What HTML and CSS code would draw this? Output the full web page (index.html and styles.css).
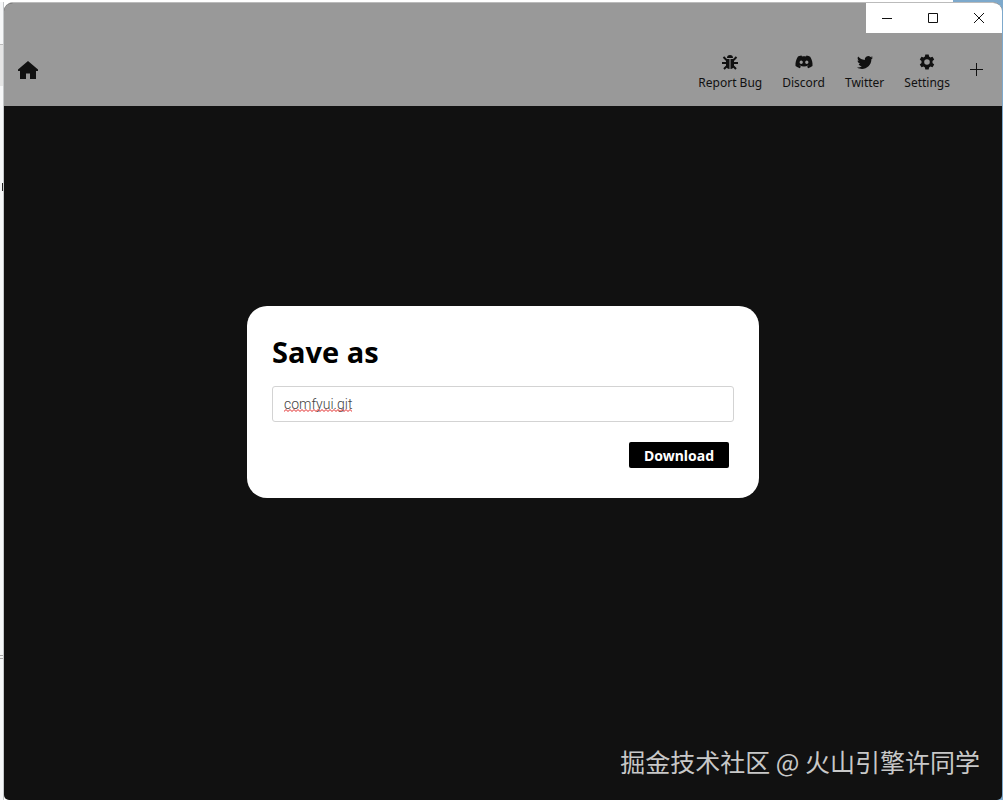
FILE: index.html
```
<!DOCTYPE html>
<html lang="en">
    <head>
        <meta charset="utf-8">
        <title>Save as</title>
        <link rel="stylesheet" href="styles.css">
    </head>
    <body>
        <!-- the edge of the window that sits behind this one -->
        <div class="behind">
            <div class="behind-tab"></div>
            <div class="behind-mark"></div>
            <div class="behind-rule"></div>
        </div>

        <div class="window">
            <header>
                <div class="controls">
                    <button type="button" aria-label="Minimize">
                        <svg width="12" height="12" viewBox="0 0 12 12"><path d="M1 6.5h10"/></svg>
                    </button>
                    <button type="button" aria-label="Maximize">
                        <svg width="12" height="12" viewBox="0 0 12 12"><path d="M1.5 1.5h9v9h-9z"/></svg>
                    </button>
                    <button type="button" aria-label="Close">
                        <svg width="12" height="12" viewBox="0 0 12 12"><path d="M1 1l10 10M11 1L1 11"/></svg>
                    </button>
                </div>
                <nav>
                    <a class="home" href="#" aria-label="Home">
                        <svg width="20" height="18" viewBox="0 0 20 18"><path d="M10 0L0 8.500v1.500h2v8h6v-5.500h4V18h6v-8h2V8.500z"/></svg>
                    </a>
                    <a class="item" href="#">
                        <svg width="16" height="16" viewBox="0 0 16 16">
                            <path d="M5 4a3 3 0 0 1 6 0zM4 5h3.500v10C5.500 15 4 13.500 4 11.500zM12 5H8.500v10c2 0 3.500-1.500 3.500-3.500z"/>
                            <path class="line" d="M1.500 3l3 3M14.500 3l-3 3M0 9h4.500M11.500 9H16M2 15l3-3M14 15l-3-3"/>
                        </svg>
                        Report Bug
                    </a>
                    <a class="item" href="#">
                        <svg width="18" height="16" viewBox="0 0 18 16"><path fill-rule="evenodd" d="M6.500 1.500C4.800 1.700 3.500 2.200 2.800 2.700 1 5.500.3 8.500.5 12c1.300 1.100 2.800 1.800 4.400 2.200l1-1.600-1.400-.8.4-.3c2.600 1.200 5.600 1.200 8.200 0l.4.300-1.400.8 1 1.600c1.600-.4 3.100-1.100 4.400-2.200.3-3.500-.5-6.500-2.300-9.300-.9-.5-2.200-1-3.700-1.200l-.5 1c-1.300-.2-2.700-.2-4 0zM6.200 6.500c.9 0 1.600.8 1.600 1.800s-.7 1.700-1.600 1.700-1.600-.8-1.600-1.700.7-1.800 1.600-1.800zM11.800 6.500c.9 0 1.600.8 1.600 1.800s-.7 1.700-1.600 1.700-1.600-.8-1.600-1.700.7-1.800 1.600-1.800z"/></svg>
                        Discord
                    </a>
                    <a class="item" href="#">
                        <svg width="16" height="16" viewBox="0 0 16 16"><path d="M16 3.500c-.6.300-1.200.4-1.900.5.700-.4 1.200-1 1.400-1.800-.6.400-1.300.6-2 .8a3.300 3.300 0 0 0-5.600 3C5.100 5.900 2.700 4.600 1.100 2.600c-.9 1.500-.4 3.400 1 4.400-.5 0-1-.2-1.500-.4 0 1.600 1.100 2.900 2.600 3.300-.5.100-1 .1-1.500 0 .4 1.300 1.600 2.200 3.100 2.300A6.600 6.600 0 0 1 0 13.500c6.300 3.800 14.500-.4 14.400-8.300.6-.5 1.200-1 1.600-1.700z"/></svg>
                        Twitter
                    </a>
                    <a class="item" href="#">
                        <svg width="16" height="16" viewBox="0 0 16 16"><path fill-rule="evenodd" d="M6.300.5h3.400l.4 2.100 1.300.8 2.100-.7 1.700 2.900-1.700 1.500v1.800l1.700 1.500-1.700 2.900-2.100-.7-1.300.8-.4 2.100H6.300l-.4-2.100-1.300-.8-2.100.7L.8 10.400l1.700-1.500V7.100L.8 5.600l1.700-2.900 2.100.7 1.300-.8zM8 5.200a2.800 2.800 0 1 0 0 5.600 2.800 2.800 0 0 0 0-5.600z"/></svg>
                        Settings
                    </a>
                    <button class="add" type="button" aria-label="New window">
                        <svg width="13" height="13" viewBox="0 0 13 13"><path d="M6.500 0v13M0 6.500h13"/></svg>
                    </button>
                </nav>
            </header>

            <main>
                <form class="dialog">
                    <h1><label for="filename">Save as</label></h1>
                    <div class="field">
                        <input id="filename" type="text" value="comfyui.git" spellcheck="false">
                        <svg class="squiggle" width="68" height="3" viewBox="0 0 68 3">
                            <defs>
                                <pattern id="wave" width="4" height="3" patternUnits="userSpaceOnUse">
                                    <path d="M-1 1.500L0 2.500L2 .5L4 2.500L5 1.500"/>
                                </pattern>
                            </defs>
                            <rect width="68" height="3" fill="url(#wave)"/>
                        </svg>
                    </div>
                    <button type="button">Download</button>
                </form>
            </main>

            <div class="watermark">掘金技术社区 @ 火山引擎许同学</div>
        </div>
    </body>
</html>
```
FILE: styles.css
```
* {
    box-sizing: border-box;
}

body {
    display: flex;
    min-height: 100vh;
    margin: 0;
    padding: 2px 1px 0 0;
    background: linear-gradient(to right, #fff 95%, #7da9cc 95%);
    font-family: "Noto Sans", "Noto Sans CJK SC", sans-serif;
}

button {
    padding: 0;
    border: none;
    background: none;
}

svg {
    display: block;
    fill: #111;
}

/* strip on the left */
.behind {
    width: 4px;
    padding-top: 42px;
    background: #f6f7f8;
    border-right: 1px solid #c5c8ca;
}

.behind-tab {
    height: 42px;
    background: #e5e5e5;
    border-top: 1px solid #bbb;
}

.behind-mark {
    width: 1px;
    height: 8px;
    margin: 97px 0 0 2px;
    background: #222;
}

.behind-rule {
    height: 4px;
    margin-top: 464px;
    border: solid #aaa;
    border-width: 1px 0;
}

.window {
    position: relative;
    display: flex;
    flex: 1;
    flex-direction: column;
    overflow: hidden;
    background: #111;
    border-top: 1px solid #bbb;
    border-radius: 9px 9px 5px 5px;
}

header {
    background: #999;
}

.controls {
    display: flex;
    justify-content: flex-end;
    width: 136px;
    height: 30px;
    margin-left: auto;
    background: #fff;
}

.controls button {
    display: flex;
    flex: none;
    align-items: center;
    justify-content: center;
    width: 46px;
}

.controls svg,
.add svg {
    fill: none;
    stroke: #111;
}

nav {
    display: flex;
    align-items: center;
    gap: 20px;
    height: 73px;
    padding: 0 19px 0 14px;
}

.home {
    margin-right: auto;
}

.item {
    display: flex;
    flex-direction: column;
    align-items: center;
    gap: 4px;
    padding-top: 7px;
    color: #111;
    font-size: 12px;
    line-height: 18px;
    text-decoration: none;
}

.line {
    stroke: #111;
    stroke-width: 2;
}

main {
    display: flex;
    flex: 1;
    align-items: center;
    justify-content: center;
    padding-bottom: 102px;
}

.dialog {
    display: flex;
    flex-direction: column;
    width: 512px;
    max-width: 100%;
    padding: 25px;
    background: #fff;
    border-radius: 20px;
}

h1 {
    margin: 0 0 13px;
    font-family: "Open Sans", sans-serif;
    font-size: 29px;
    line-height: 42px;
}

.field {
    position: relative;
}

input {
    display: block;
    width: 100%;
    height: 36px;
    padding: 0 11px;
    border: 1px solid #d3d3d3;
    border-radius: 3px;
    color: #444;
    font-family: Roboto, sans-serif;
    font-size: 14px;
    font-weight: 300;
}

/* spelling mark under the file name */
.squiggle {
    position: absolute;
    left: 12px;
    bottom: 10px;
}

.squiggle path {
    fill: none;
    stroke: #e02020;
}

.dialog button {
    align-self: flex-end;
    height: 26px;
    margin: 20px 5px 5px 0;
    padding: 0 15px;
    background: #000;
    border-radius: 2px;
    color: #fff;
    font-family: "Noto Sans", sans-serif;
    font-size: 14px;
    font-weight: bold;
}

.watermark {
    position: absolute;
    right: 22px;
    bottom: 21px;
    color: #c8c8c8;
    font-family: "Noto Sans CJK SC", sans-serif;
    font-size: 25px;
    line-height: 36px;
}
```
